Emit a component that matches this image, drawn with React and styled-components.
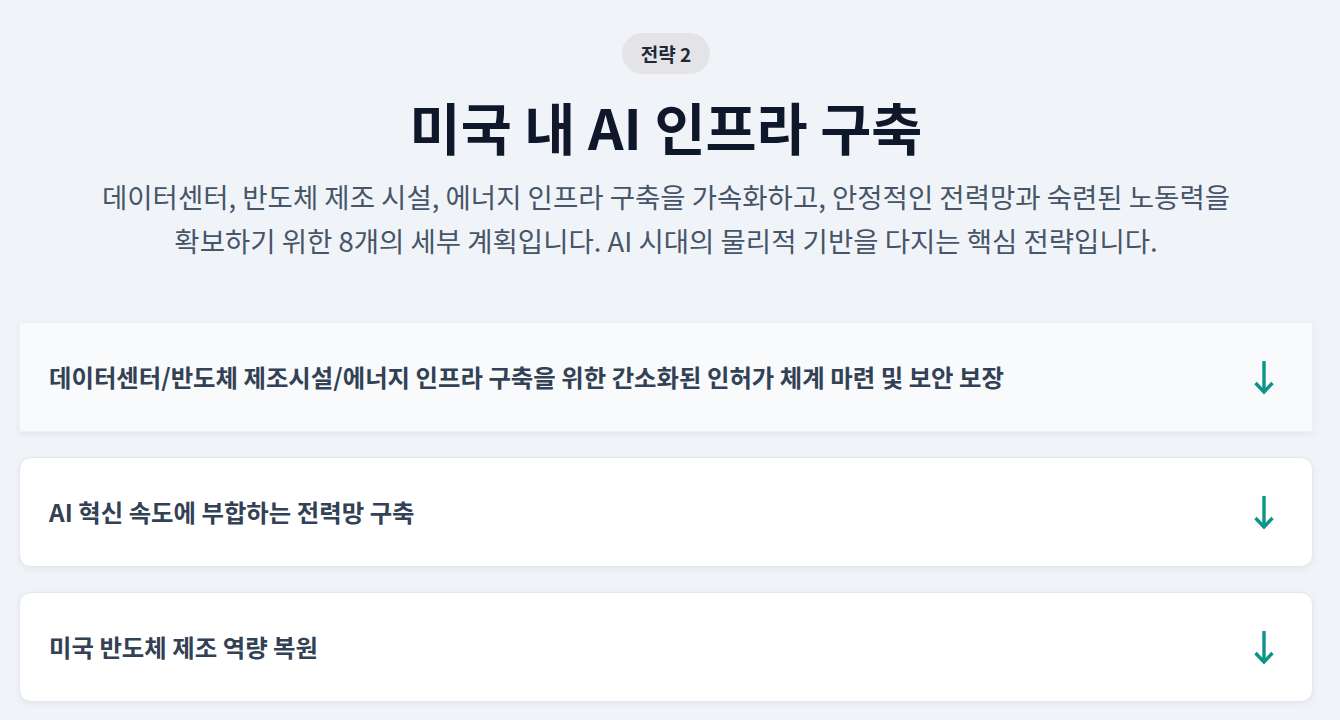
import styled, { createGlobalStyle } from 'styled-components';

const GlobalStyle = createGlobalStyle`
  body {
    margin: 0;
    background: #f0f4f8;
    font-family: "Noto Sans CJK KR", "Noto Sans", sans-serif;
    color: #0f172a;
  }
`

const steps = [
  { title: '데이터센터/반도체 제조시설/에너지 인프라 구축을 위한 간소화된 인허가 체계 마련 및 보안 보장', active: true },
  { title: 'AI 혁신 속도에 부합하는 전력망 구축' },
  { title: '미국 반도체 제조 역량 복원' },
]

const ArrowDown = () => (
  <svg width="20" height="36" viewBox="0 0 20 36" fill="none" stroke="#0d9488" strokeWidth="3.4">
    <path d="M10 2 V32" />
    <path d="M1.5 24 L10 33 L18.5 24" />
  </svg>
)

const App = () => {
  return (
    <Page>
      <GlobalStyle />
      <Header>
        <Badge>전략 2</Badge>
        <Title>미국 내 AI 인프라 구축</Title>
        <Lead>
          데이터센터, 반도체 제조 시설, 에너지 인프라 구축을 가속화하고, 안정적인 전력망과 숙련된 노동력을
          <br />
          확보하기 위한 8개의 세부 계획입니다. AI 시대의 물리적 기반을 다지는 핵심 전략입니다.
        </Lead>
      </Header>
      <List>
        {steps.map((s, i) => (
          <Card key={i} $active={s.active}>
            <CardTitle>{s.title}</CardTitle>
            <ArrowDown />
          </Card>
        ))}
      </List>
    </Page>
  )
}

const Page = styled.main`
  padding: 33px 27px 40px 19px;
`

const Header = styled.header`
  display: flex;
  flex-direction: column;
  align-items: center;
  text-align: center;
`

const Badge = styled.span`
  display: inline-block;
  background: #e4e4e7;
  color: #1f2937;
  font-size: 19px;
  font-weight: 700;
  line-height: 41px;
  padding: 0 19px;
  border-radius: 999px;
`

const Title = styled.h1`
  margin: 12px 0 0;
  font-size: 55.5px;
  font-weight: 700;
  line-height: 80px;
  color: #0f172a;
`

const Lead = styled.p`
  margin: 8px 0 0;
  font-size: 27.5px;
  line-height: 44px;
  color: #475569;
`

const List = styled.div`
  display: flex;
  flex-direction: column;
  gap: 25px;
  margin-top: 60px;
`

const Card = styled.div`
  display: flex;
  align-items: center;
  justify-content: space-between;
  padding: 32px 38px 32px 29px;
  background: ${p => (p.$active ? '#f8fafc' : '#ffffff')};
  border: 1px solid ${p => (p.$active ? '#eef2f6' : '#e2e8f0')};
  border-radius: ${p => (p.$active ? '0' : '12px')};
  box-shadow: 0 2px 6px rgba(15, 23, 42, 0.06);
`

const CardTitle = styled.h3`
  margin: 0;
  font-size: 24.4px;
  font-weight: 700;
  line-height: 44px;
  color: #334155;
`

export default App
